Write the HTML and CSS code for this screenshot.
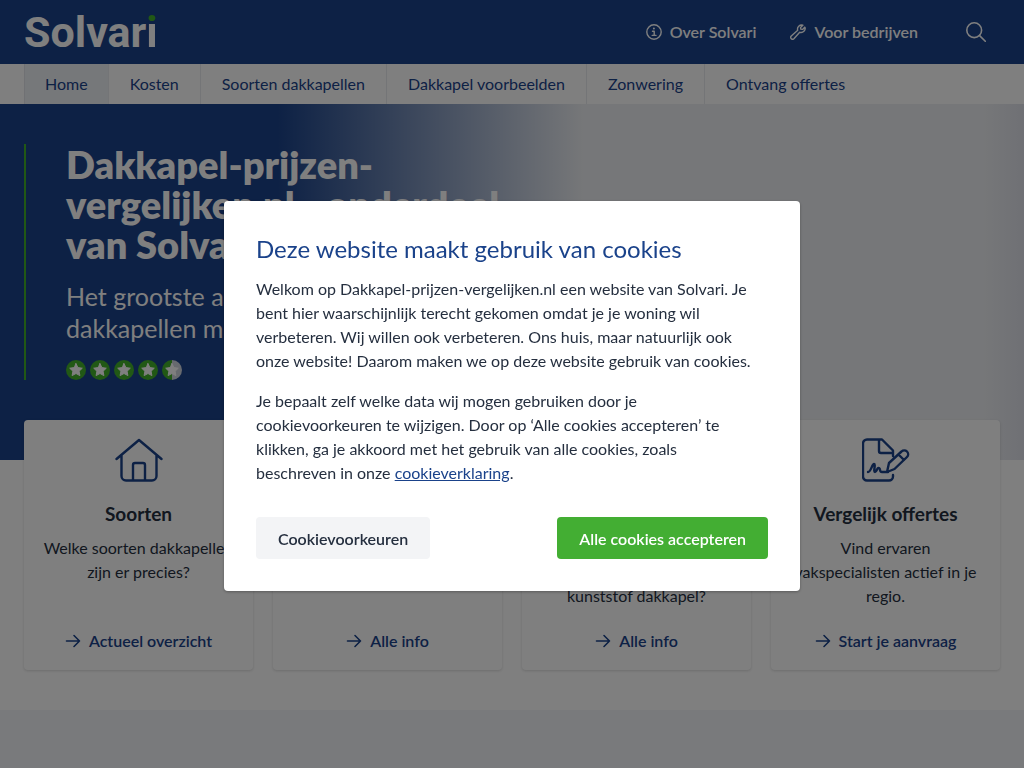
FILE: index.html
```html
<!DOCTYPE html>
<html lang="nl">
<head>
    <meta charset="UTF-8">
    <meta name="viewport" content="width=device-width, initial-scale=1.0">
    <title>Dakkapel-prijzen-vergelijken.nl - onderdeel van Solvari</title>
    <link rel="stylesheet" href="styles.css">
</head>
<body>

    <!-- Icons -->
    <svg class="sprite" aria-hidden="true">
        <symbol id="arrow" viewBox="0 0 16 16">
            <path d="M1.5 8h13M9 2.5 14.5 8 9 13.5"/>
        </symbol>
        <symbol id="star" viewBox="0 0 20 20">
            <path d="M10 3.6l1.9 4 4.4.6-3.2 3 .8 4.4-3.9-2.1-3.9 2.1.8-4.4-3.2-3 4.4-.6z"/>
        </symbol>
    </svg>

    <header class="header">
        <a href="#" class="logo">Solvar<span>i</span></a>
        <div class="header-links">
            <a href="#">
                <svg class="icon" viewBox="0 0 16 16"><circle cx="8" cy="8" r="7.2"/><path d="M6.5 7.2h1.7v4M6.2 11.4h3.8"/><circle class="dot" cx="7.9" cy="4.6" r="1"/></svg>
                Over Solvari
            </a>
            <a href="#">
                <svg class="icon" viewBox="0 0 16 16"><path d="M12.9 1.2a4.1 4.1 0 0 0-5.2 5.1L1.3 12a1.8 1.8 0 0 0 2.6 2.7l5.8-6.4a4.1 4.1 0 0 0 5.200-5.200l-2.300 2.300-1.800-.3-.3-1.700z"/></svg>
                Voor bedrijven
            </a>
            <button class="search" aria-label="Zoeken">
                <svg viewBox="0 0 20 20"><circle cx="8.2" cy="8.2" r="7.4"/><path d="M13.6 13.6l5.700 5.700"/></svg>
            </button>
        </div>
    </header>

    <nav class="menu">
        <a href="#" class="active">Home</a>
        <a href="#">Kosten</a>
        <a href="#">Soorten dakkapellen</a>
        <a href="#">Dakkapel voorbeelden</a>
        <a href="#">Zonwering</a>
        <a href="#">Ontvang offertes</a>
    </nav>

    <main>
        <section class="hero">
            <div class="hero-text">
                <h1>Dakkapel-prijzen-<br>vergelijken.nl - onderdeel van Solvari</h1>
                <p>Het grootste aanbod van<br>dakkapellen met reviews</p>
                <div class="stars">
                    <svg class="star"><use href="#star"/></svg>
                    <svg class="star"><use href="#star"/></svg>
                    <svg class="star"><use href="#star"/></svg>
                    <svg class="star"><use href="#star"/></svg>
                    <svg class="star half"><use href="#star"/></svg>
                </div>
            </div>
        </section>

        <section class="cards">
            <article class="card">
                <svg class="card-icon" viewBox="0 0 48 48"><path d="M1.5 23 24 4 46.5 23M6.500 19v21a4.500 4.500 0 0 0 4.500 4.500h26a4.500 4.500 0 0 0 4.500-4.500V19M18 44V29a2 2 0 0 1 2-2h8a2 2 0 0 1 2 2v15"/></svg>
                <h2>Soorten</h2>
                <p>Welke soorten dakkapellen zijn er precies?</p>
                <a href="#"><svg class="arrow"><use href="#arrow"/></svg>Actueel overzicht</a>
            </article>
            <article class="card">
                <svg class="card-icon" viewBox="0 0 48 48"><circle cx="24" cy="24" r="20"/></svg>
                <h2>Kosten</h2>
                <p>Wat kost een dakkapel?</p>
                <a href="#"><svg class="arrow"><use href="#arrow"/></svg>Alle info</a>
            </article>
            <article class="card">
                <svg class="card-icon" viewBox="0 0 48 48"><path d="M6 10h36v30H6zM24 10v30"/></svg>
                <h2>Materialen</h2>
                <p>Kies je voor een<br>houten of een<br>kunststof dakkapel?</p>
                <a href="#"><svg class="arrow"><use href="#arrow"/></svg>Alle info</a>
            </article>
            <article class="card">
                <svg class="card-icon" viewBox="0 0 48 48"><path d="M31 39v1.500a4 4 0 0 1-4 4H5a4 4 0 0 1-4-4v-33a4 4 0 0 1 4-4h15L31 14.500V20M17 4v11a2 2 0 0 0 2 2h12M6 36c3 0 4-8 6-8s-1 8 1 8 2-5 4-4 0 4 3 4h6M25 36l2-9 12.500-11.500a3.700 3.700 0 0 1 5.500 5.500l-12.500 12zM36.500 18.500l5.500 5.500"/></svg>
                <h2>Vergelijk offertes</h2>
                <p>Vind ervaren vakspecialisten actief in je regio.</p>
                <a href="#"><svg class="arrow"><use href="#arrow"/></svg>Start je aanvraag</a>
            </article>
        </section>

        <section class="grey"></section>
    </main>

    <!-- Cookiemelding -->
    <div class="overlay">
        <div class="modal" role="dialog" aria-modal="true" aria-labelledby="cookieTitle">
            <h2 id="cookieTitle">Deze website maakt gebruik van cookies</h2>
            <p>Welkom op Dakkapel-prijzen-vergelijken.nl een website van Solvari. Je bent hier waarschijnlijk terecht gekomen omdat je je woning wil verbeteren. Wij willen ook verbeteren. Ons huis, maar natuurlijk ook onze website! Daarom maken we op deze website gebruik van cookies.</p>
            <p>Je bepaalt zelf welke data wij mogen gebruiken door je<br>cookievoorkeuren te wijzigen. Door op ‘Alle cookies accepteren’ te<br>klikken, ga je akkoord met het gebruik van alle cookies, zoals<br>beschreven in onze <a href="#">cookieverklaring</a>.</p>
            <div class="modal-buttons">
                <button class="btn">Cookievoorkeuren</button>
                <button class="btn btn-green">Alle cookies accepteren</button>
            </div>
        </div>
    </div>

</body>
</html>
```
FILE: styles.css
```css
* {
    margin: 0;
    padding: 0;
    box-sizing: border-box;
}

body {
    display: flex;
    flex-direction: column;
    font-family: Lato, "Open Sans", sans-serif;
    font-size: 16px;
    line-height: 24px;
    color: #252f3f;
    background-color: white;
    min-height: 100vh;
}

main {
    flex: 1;
    display: flex;
    flex-direction: column;
}

a {
    color: #1a428a;
    text-decoration: none;
}

svg {
    fill: none;
    stroke: currentColor;
    stroke-linecap: round;
    stroke-linejoin: round;
    flex-shrink: 0;
}

.sprite {
    display: none;
}

/* Header */
.header {
    display: flex;
    justify-content: space-between;
    align-items: center;
    height: 64px;
    padding: 0 24px;
    background-color: #1a428a;
}

.logo {
    font-family: Roboto, sans-serif;
    font-size: 43px;
    line-height: 48px;
    font-weight: bold;
    color: white;
}

/* groene punt op de i */
.logo span {
    background: linear-gradient(#43b02a 15px, white 15px);
    -webkit-background-clip: text;
    background-clip: text;
    color: transparent;
}

.header-links {
    display: flex;
    align-items: center;
    gap: 34px;
}

.header-links a {
    display: flex;
    align-items: center;
    gap: 8px;
    color: white;
    font-weight: 600;
}

.icon {
    width: 16px;
    height: 16px;
    stroke-width: 1.4;
}

.icon .dot {
    fill: currentColor;
    stroke: none;
}

.search {
    display: flex;
    justify-content: center;
    align-items: center;
    width: 48px;
    height: 48px;
    background: none;
    border: none;
    color: white;
    cursor: pointer;
}

.search svg {
    width: 20px;
    height: 20px;
    stroke-width: 1.6;
}

/* Menu */
.menu {
    display: flex;
    height: 40px;
    padding: 0 24px;
    background-color: white;
}

.menu a {
    padding: 8px 21px;
    border-right: 1px solid #e8eaee;
}

.menu a:first-child {
    padding: 8px 20px;
    border-left: 1px solid #e0e3e8;
}

.menu a:last-child {
    border-right: none;
}

.menu a.active {
    background-color: #edf0f4;
}

/* Hero */
.hero {
    padding: 40px 24px 80px;
    background: linear-gradient(90deg, #1a428a 27%, rgba(26, 66, 138, 0) 57%),
                linear-gradient(90deg, #edeff2 96%, #dfe1ea);
}

.hero-text {
    border-left: 2px solid #43b02a;
    padding-left: 40px;
    max-width: 512px;
    color: white;
}

.hero-text h1 {
    font-size: 38px;
    line-height: 40px;
    font-weight: 800;
    margin-bottom: 16px;
}

.hero-text p {
    font-size: 25px;
    line-height: 32px;
    margin-bottom: 16px;
}

.stars {
    display: flex;
    gap: 4px;
}

.star {
    width: 20px;
    height: 20px;
    border-radius: 50%;
    background-color: #43b02a;
    fill: white;
    stroke: white;
}

.star.half {
    background: linear-gradient(90deg, #43b02a 50%, #cfd4de 50%);
}

/* Kaarten */
.cards {
    display: grid;
    grid-template-columns: repeat(4, 1fr);
    gap: 20px;
    margin-top: -40px;
    padding: 0 24px 40px;
}

.card {
    display: flex;
    flex-direction: column;
    align-items: center;
    padding: 16px 16px 8px;
    background-color: white;
    border-radius: 4px;
    box-shadow: 0 1px 3px rgba(0, 0, 0, 0.15);
    text-align: center;
}

.card-icon {
    width: 48px;
    height: 48px;
    margin-bottom: 16px;
    color: #1a428a;
    stroke-width: 2.4;
}

.card h2 {
    font-size: 19px;
    line-height: 28px;
    font-weight: bold;
    margin-bottom: 8px;
}

.card p {
    margin-bottom: 12px;
}

.card a {
    display: flex;
    align-items: center;
    gap: 8px;
    height: 42px;
    margin-top: auto;
    font-weight: 600;
}

.arrow {
    width: 16px;
    height: 16px;
    stroke-width: 1.6;
}

.grey {
    flex: 1;
    background-color: #f2f4f8;
}

/* Cookiemelding */
.overlay {
    position: fixed;
    inset: 0;
    display: flex;
    justify-content: center;
    align-items: center;
    padding: 24px 24px 0;
    background-color: rgba(0, 0, 0, 0.5);
}

.modal {
    width: 100%;
    max-width: 576px;
    padding: 32px;
    background-color: white;
    border-radius: 4px;
    box-shadow: 0 1px 3px rgba(0, 0, 0, 0.3);
}

.modal h2 {
    font-size: 24px;
    line-height: 32px;
    font-weight: normal;
    color: #1a428a;
    margin-bottom: 12px;
}

.modal p {
    margin-bottom: 16px;
}

.modal p a {
    text-decoration: underline;
}

.modal-buttons {
    display: flex;
    justify-content: space-between;
    margin-top: 32px;
}

.btn {
    height: 42px;
    padding: 0 22px;
    font-family: inherit;
    font-size: 16px;
    font-weight: 600;
    color: #252f3f;
    background-color: #f3f4f6;
    border: none;
    border-radius: 4px;
    cursor: pointer;
}

.btn-green {
    color: white;
    background-color: #43ae33;
}
```
